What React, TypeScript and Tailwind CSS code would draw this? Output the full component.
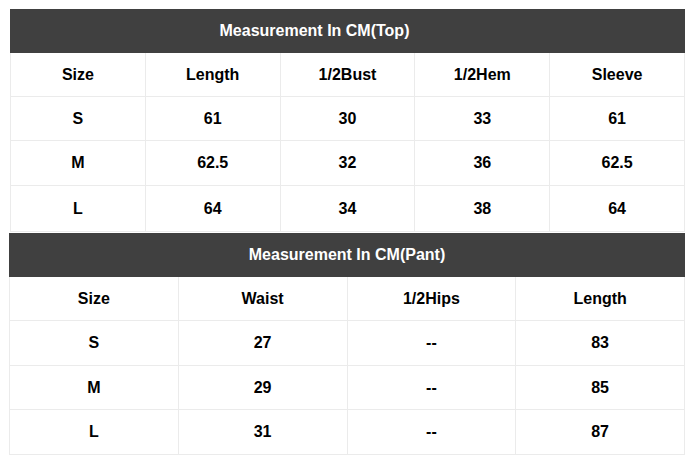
const top = {
  title: 'Measurement In CM(Top)',
  cols: ['Size', 'Length', '1/2Bust', '1/2Hem', 'Sleeve'],
  rows: [
    ['S', '61', '30', '33', '61'],
    ['M', '62.5', '32', '36', '62.5'],
    ['L', '64', '34', '38', '64'],
  ],
  heights: ['h-[44px]', 'h-[44px]', 'h-[45px]', 'h-[46px]'],
};

const pant = {
  title: 'Measurement In CM(Pant)',
  cols: ['Size', 'Waist', '1/2Hips', 'Length'],
  rows: [
    ['S', '27', '--', '83'],
    ['M', '29', '--', '85'],
    ['L', '31', '--', '87'],
  ],
  heights: ['h-[44px]', 'h-[45px]', 'h-[44px]', 'h-[45px]'],
};

function SizeTable({
  data,
  gridCols,
  className,
  titleClass = '',
}: {
  data: typeof top;
  gridCols: string;
  className: string;
  titleClass?: string;
}) {
  const allRows = [data.cols, ...data.rows];
  return (
    <div className={className}>
      <div className={`h-[44px] bg-[#404040] flex items-center justify-center text-white ${titleClass}`}>
        {data.title}
      </div>
      <div className="border-l border-[#ebebeb]">
        {allRows.map((row, i) => (
          <div key={i} className={`grid ${gridCols} ${data.heights[i]}`}>
            {row.map((cell, j) => (
              <div
                key={j}
                className="flex items-center justify-center border-r border-b border-[#ebebeb] text-black"
              >
                {cell}
              </div>
            ))}
          </div>
        ))}
      </div>
    </div>
  );
}

export default function App() {
  return (
    <div className="w-[696px] h-[465px] bg-white pt-[9px] font-['Liberation_Sans',Arial,sans-serif] text-[16px] font-bold">
      <SizeTable data={top} gridCols="grid-cols-5" className="ml-[10px] w-[675px]" titleClass="pr-[66px]" />
      <SizeTable data={pant} gridCols="grid-cols-4" className="ml-[9px] mt-px w-[676px]" />
    </div>
  );
}
